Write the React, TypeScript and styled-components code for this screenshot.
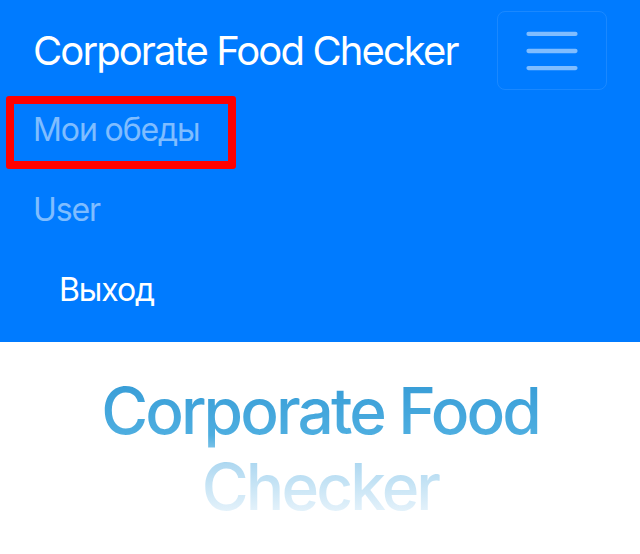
import React from "react";
import styled, { createGlobalStyle } from "styled-components";

const GlobalStyle = createGlobalStyle`
  html, body {
    margin: 0;
    padding: 0;
    background: #ffffff;
  }
  body {
    font-family: Inter, "Noto Sans", "DejaVu Sans", sans-serif;
    -webkit-font-smoothing: antialiased;
  }
  * { box-sizing: border-box; }
`;

const Navbar = styled.nav`
  position: relative;
  background: #007bff;
  padding: 11px 33px 0 33px;
  height: 342px;
`;

const TopRow = styled.div`
  display: flex;
  align-items: center;
  justify-content: space-between;
`;

const Brand = styled.a`
  color: #ffffff;
  font-size: 40px;
  line-height: 60px;
  font-weight: 400;
  letter-spacing: -1.9px;
  text-decoration: none;
  white-space: nowrap;
`;

const Toggler = styled.button`
  width: 110px;
  height: 79px;
  display: flex;
  align-items: center;
  justify-content: center;
  background: transparent;
  border: 1px solid rgba(255, 255, 255, 0.1);
  border-radius: 8px;
  padding: 0;
`;

const NavList = styled.ul`
  list-style: none;
  margin: 0;
  padding: 0;
  display: flex;
  flex-direction: column;
`;

const NavItem = styled.li<{ $top?: number; $indent?: number }>`
  padding: ${(p) => p.$top ?? 16}px 0 16px ${(p) => p.$indent ?? 0}px;
`;

const NavLink = styled.a<{ $active?: boolean }>`
  display: block;
  font-size: 32px;
  line-height: 48px;
  letter-spacing: -1.1px;
  color: ${(p) => (p.$active ? "#ffffff" : "rgba(255, 255, 255, 0.5)")};
  text-decoration: none;
`;

const Highlight = styled.div`
  position: absolute;
  left: 6px;
  top: 96px;
  width: 230px;
  height: 73px;
  border: 8px solid #ff0000;
  border-radius: 3px;
  pointer-events: none;
`;

const Hero = styled.section`
  display: flex;
  justify-content: center;
  padding-top: 31px;
`;

const HeroTitle = styled.h1`
  margin: 0;
  width: 520px;
  text-align: center;
  font-size: 64px;
  line-height: 76px;
  font-weight: 500;
  letter-spacing: -2.9px;
  background: linear-gradient(
    to bottom,
    #3399d5 0%,
    #3a9fd8 10%,
    #4eaee0 41%,
    #b0d9f1 60%,
    #e2f1fa 90%,
    #eef7fc 100%
  );
  -webkit-background-clip: text;
  background-clip: text;
  color: transparent;
`;

const MenuIcon = () => (
  <svg width="64" height="64" viewBox="0 0 30 30" aria-hidden="true">
    <path
      d="M4 7h22M4 15h22M4 23h22"
      stroke="rgba(255,255,255,0.5)"
      strokeWidth="2"
      strokeLinecap="round"
      fill="none"
    />
  </svg>
);

export default function App() {
  return (
    <>
      <GlobalStyle />
      <Navbar>
        <TopRow>
          <Brand href="#">Corporate Food Checker</Brand>
          <Toggler type="button" aria-label="Toggle navigation">
            <MenuIcon />
          </Toggler>
        </TopRow>
        <NavList>
          <NavItem>
            <NavLink href="#">Мои обеды</NavLink>
          </NavItem>
          <NavItem>
            <NavLink href="#">User</NavLink>
          </NavItem>
          <NavItem $top={16} $indent={26}>
            <NavLink href="#" $active>
              Выход
            </NavLink>
          </NavItem>
        </NavList>
        <Highlight />
      </Navbar>
      <Hero>
        <HeroTitle>Corporate Food Checker</HeroTitle>
      </Hero>
    </>
  );
}
